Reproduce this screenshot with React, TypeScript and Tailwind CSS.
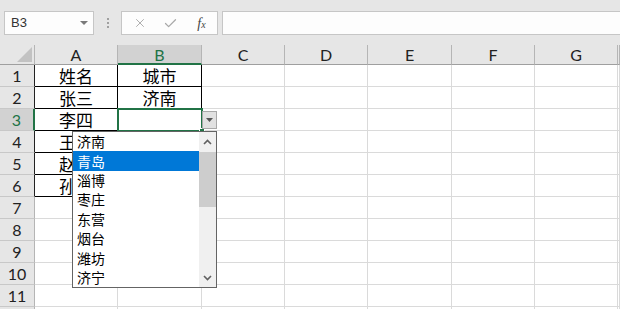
import { X, Check } from "lucide-react";

const COLS = ["A", "B", "C", "D", "E", "F", "G", ""];
const ROWS = [1, 2, 3, 4, 5, 6, 7, 8, 9, 10, 11, 12];

const DATA: Record<string, string> = {
  A1: "姓名",
  B1: "城市",
  A2: "张三",
  B2: "济南",
  A3: "李四",
  A4: "王五",
  A5: "赵六",
  A6: "孙七",
};
const TABLE = new Set(["A1", "B1", "A2", "B2", "A3", "A4", "A5", "A6"]);
const CITIES = ["济南", "青岛", "淄博", "枣庄", "东营", "烟台", "潍坊", "济宁"];

const latin = { fontFamily: "Lato, 'Open Sans', sans-serif" };
const cjk = { fontFamily: "'Noto Sans CJK SC', 'Noto Sans', sans-serif" };

function Toolbar() {
  return (
    <div className="flex h-[45px] items-start bg-[#e6e6e6] pl-[4px] pt-[11px]">
      <div className="flex h-[24px] w-[90px] items-center justify-between border border-[#c6c6c6] bg-[#fdfdfd] pl-[6px] pr-[5px]">
        <span className="text-[13px] text-[#333]" style={{ fontFamily: "'Liberation Sans', sans-serif" }}>
          B3
        </span>
        <svg width="8" height="5" viewBox="0 0 8 5">
          <polygon points="0,0 8,0 4,4" fill="#7a7a7a" />
        </svg>
      </div>
      <div className="flex h-[24px] w-[27px] flex-col items-center justify-center gap-[2px]">
        <span className="h-[2px] w-[2px] bg-[#a0a0a0]" />
        <span className="h-[2px] w-[2px] bg-[#a0a0a0]" />
        <span className="h-[2px] w-[2px] bg-[#a0a0a0]" />
      </div>
      <div className="flex h-[24px] w-[97px] items-center border border-[#c6c6c6] bg-[#fdfdfd]">
        <div className="flex w-[33px] justify-center pl-[2px]">
          <X size={14} strokeWidth={1.6} color="#a9a9a9" />
        </div>
        <div className="flex w-[31px] justify-center">
          <Check size={15} strokeWidth={2} color="#a9a9a9" />
        </div>
        <div className="flex w-[31px] justify-center">
          <span
            className="text-[14px] italic text-[#444]"
            style={{ fontFamily: "'Liberation Serif', serif" }}
          >
            f<span className="text-[10px]">x</span>
          </span>
        </div>
      </div>
      <div className="ml-[4px] h-[24px] flex-1 border border-r-0 border-[#c6c6c6] bg-[#fdfdfd]" />
    </div>
  );
}

function Chevron({ up }: { up?: boolean }) {
  return (
    <svg width="9" height="6" viewBox="0 0 9 6">
      <polyline
        points={up ? "1,5 4.5,1.5 8,5" : "1,1 4.5,4.5 8,1"}
        fill="none"
        stroke="#606060"
        strokeWidth="1.6"
      />
    </svg>
  );
}

function DropdownList() {
  return (
    <div className="absolute left-[72px] top-[86px] flex h-[157px] w-[145px] border border-[#646464] bg-white">
      <div className="flex-1" style={cjk}>
        {CITIES.map((c, i) => (
          <div
            key={c}
            className={
              i === 1
                ? "flex h-[19.4px] items-center bg-[#0078d7] pl-[4px] text-[14px] text-white"
                : "flex h-[19.4px] items-center pl-[4px] text-[14px] text-black"
            }
          >
            {c}
          </div>
        ))}
      </div>
      <div className="flex w-[17px] flex-col bg-[#f0f0f0]">
        <div className="flex h-[20px] items-center justify-center">
          <Chevron up />
        </div>
        <div className="h-[55px] bg-[#cdcdcd]" />
        <div className="flex-1" />
        <div className="flex h-[19px] items-center justify-center">
          <Chevron />
        </div>
      </div>
    </div>
  );
}

function Sheet() {
  return (
    <div className="relative h-[264px] overflow-hidden bg-white">
      <div className="grid grid-cols-[35px_83px_84px_83px_83px_84px_83px_83px_1fr] grid-rows-[20px_repeat(12,22px)]">
        <div className="relative border-b border-r border-b-[#9f9f9f] border-r-[#b5b5b5] bg-[#e6e6e6]">
          <svg className="absolute bottom-[2px] right-[2px]" width="15" height="15" viewBox="0 0 15 15">
            <polygon points="0,15 15,0 15,15" fill="#c2c2c2" />
          </svg>
        </div>
        {COLS.map((c) =>
          c === "B" ? (
            <div
              key={c}
              className="flex items-center justify-center border-b-2 border-r border-b-[#217346] border-r-[#b5b5b5] bg-[#d2d2d2] pt-[2px] text-[16px] text-[#217346]"
              style={latin}
            >
              {c}
            </div>
          ) : (
            <div
              key={c}
              className="flex items-center justify-center border-b border-r border-b-[#9f9f9f] border-r-[#b5b5b5] bg-[#e6e6e6] text-[16px] text-[#222]"
              style={latin}
            >
              {c}
            </div>
          )
        )}
        {ROWS.map((r) => [
          <div
            key={`h${r}`}
            className={
              r === 3
                ? "flex items-center justify-center border-b border-r-2 border-b-[#c8c8c8] border-r-[#217346] bg-[#d2d2d2] text-[16px] text-[#217346]"
                : r <= 6
                ? "flex items-center justify-center border-b border-r border-b-[#c8c8c8] border-r-[#222] bg-[#e6e6e6] text-[16px] text-[#222]"
                : "flex items-center justify-center border-b border-r border-b-[#c8c8c8] border-r-[#b5b5b5] bg-[#e6e6e6] text-[16px] text-[#222]"
            }
            style={latin}
          >
            {r < 12 ? r : ""}
          </div>,
          ...COLS.map((c) => {
            const id = `${c}${r}`;
            return (
              <div
                key={id}
                className={
                  TABLE.has(id)
                    ? "flex items-center justify-center border-b border-r border-black text-[17px] text-black"
                    : "flex items-center justify-center border-b border-r border-[#dadada] text-[17px] text-black"
                }
                style={cjk}
              >
                {DATA[id] ?? ""}
              </div>
            );
          }),
        ])}
      </div>

      <div className="absolute left-[117px] top-[63px] h-[24px] w-[86px] border-2 border-[#217346]" />
      <div className="absolute left-[199px] top-[83px] h-[6px] w-[6px] border border-white bg-[#217346]" />
      <div className="absolute left-[202px] top-[66px] flex h-[18px] w-[15px] items-center justify-center border border-[#a8a8a8] bg-[#e1e1e1]">
        <svg width="7" height="4" viewBox="0 0 7 4">
          <polygon points="0,0 7,0 3.5,4" fill="#555" />
        </svg>
      </div>
      <DropdownList />
    </div>
  );
}

export default function App() {
  return (
    <div className="h-[309px] w-[620px] overflow-hidden bg-white">
      <Toolbar />
      <Sheet />
    </div>
  );
}
